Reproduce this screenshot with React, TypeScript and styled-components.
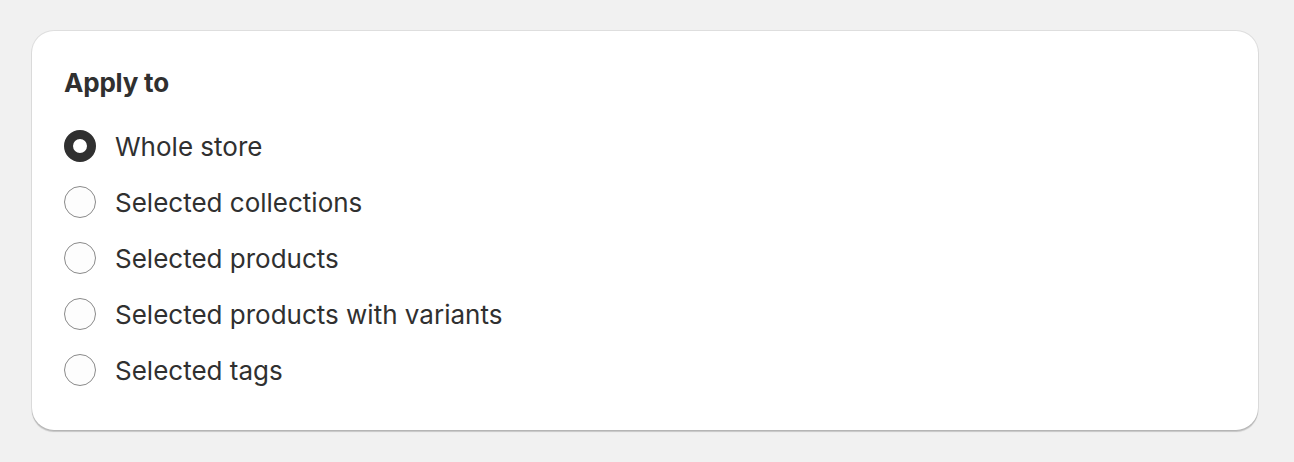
import React, { useState } from "react";
import styled, { createGlobalStyle } from "styled-components";

const Global = createGlobalStyle`
  html, body { margin: 0; padding: 0; background: #f1f1f1; }
  body { font-family: Inter, "Noto Sans", sans-serif; color: #303030; }
`;

const Page = styled.div`
  padding: 31px 36px 32px 32px;
`;

const Card = styled.div`
  background: #ffffff;
  border-radius: 22px;
  padding: 32px;
  box-shadow: 0 0 0 1px rgba(0, 0, 0, 0.08), 0 2px 1px -0.5px rgba(0, 0, 0, 0.18);
  display: flex;
  flex-direction: column;
  gap: 15px;
`;

const Heading = styled.h2`
  margin: 0;
  font-size: 26px;
  line-height: 40px;
  font-weight: 650;
  letter-spacing: -0.2px;
`;

const List = styled.div`
  display: flex;
  flex-direction: column;
`;

const Option = styled.label`
  display: flex;
  align-items: center;
  gap: 19px;
  height: 56px;
  font-size: 26px;
  cursor: pointer;
`;

const Radio = styled.span<{ $checked: boolean }>`
  width: 32px;
  height: 32px;
  box-sizing: border-box;
  border-radius: 50%;
  flex: none;
  background: ${(p) => (p.$checked ? "#ffffff" : "#fdfdfd")};
  border: ${(p) => (p.$checked ? "9px solid #303030" : "1.5px solid #8a8a8a")};
`;

const options = [
  "Whole store",
  "Selected collections",
  "Selected products",
  "Selected products with variants",
  "Selected tags",
];

export default function App() {
  const [sel, setSel] = useState(0);
  return (
    <>
      <Global />
      <Page>
        <Card>
          <Heading>Apply to</Heading>
          <List>
            {options.map((o, i) => (
              <Option key={o} onClick={() => setSel(i)}>
                <Radio $checked={sel === i} />
                {o}
              </Option>
            ))}
          </List>
        </Card>
      </Page>
    </>
  );
}
